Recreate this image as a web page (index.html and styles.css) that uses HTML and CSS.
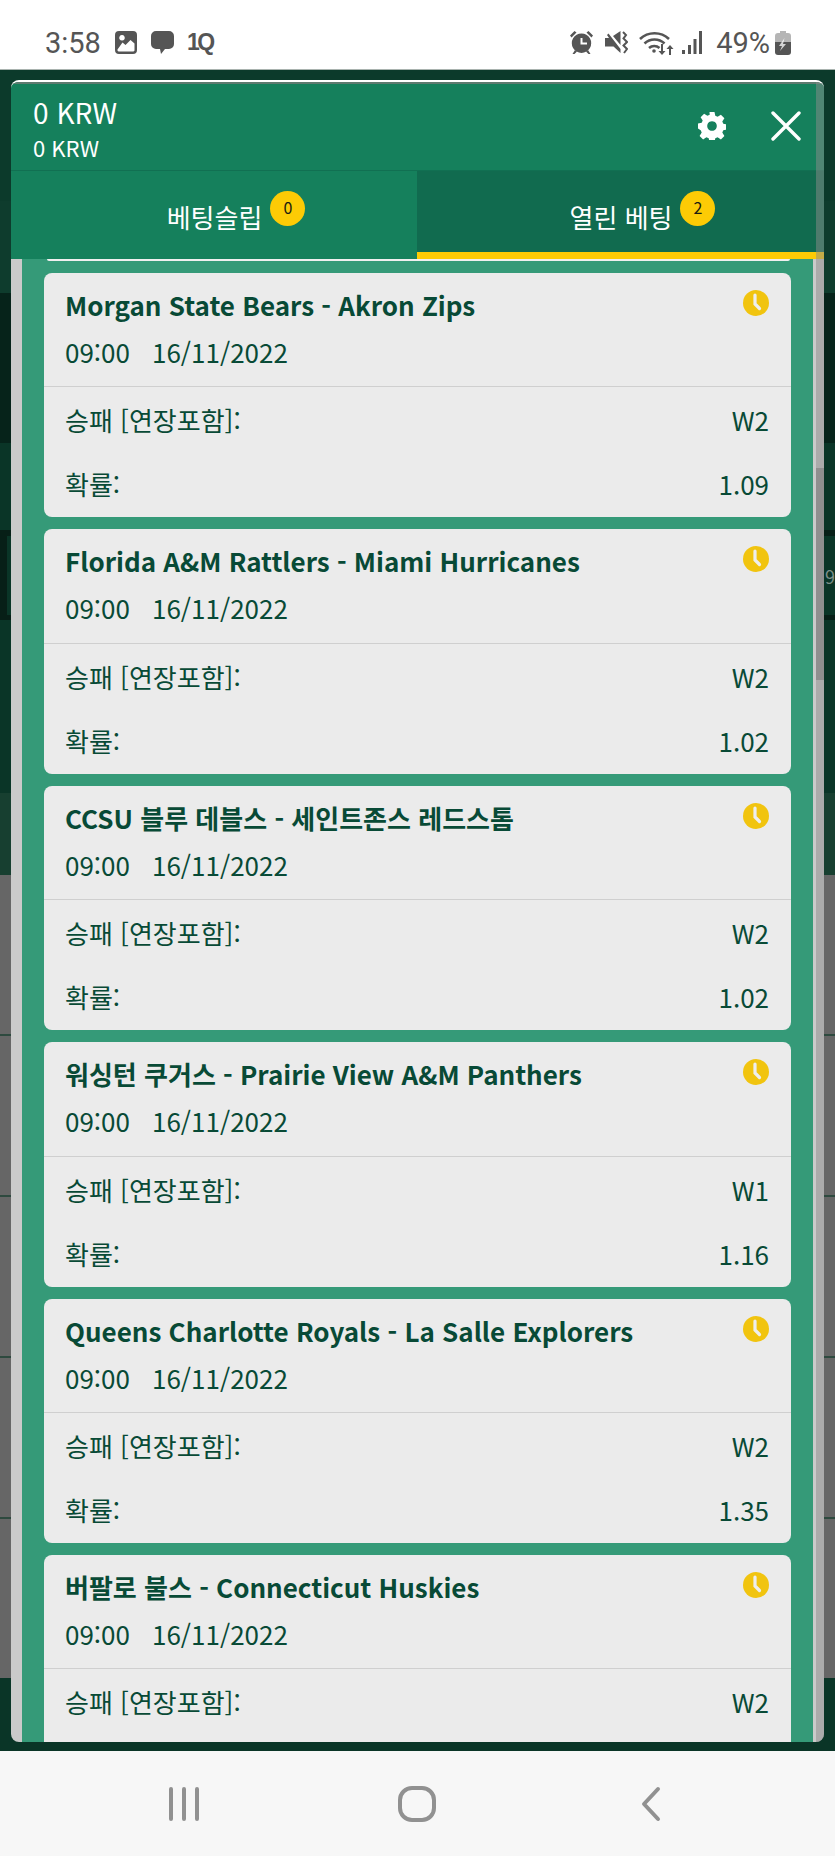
FILE: index.html
```html
<!DOCTYPE html>
<html lang="ko">
<head>
  <meta charset="UTF-8" />
  <meta name="viewport" content="width=device-width, initial-scale=1.0" />
  <title>열린 베팅</title>
  <link rel="stylesheet" href="styles.css">
</head>
<body>
  <!-- status bar -->
  <div class="status-bar">
    <div class="status-left">
      <span class="clock">3:58</span>
      <svg class="ic ic-pic" viewBox="0 0 22 23"><path fill-rule="evenodd" d="M4 0h14a4 4 0 0 1 4 4v15a4 4 0 0 1-4 4H4a4 4 0 0 1-4-4V4a4 4 0 0 1 4-4zM2.500 18.500v1a1.500 1.500 0 0 0 1.500 1h14a1.500 1.500 0 0 0 1.500-1v-7l-4-3.500-5 5-3-2.500zM7 4a2.800 2.800 0 1 0 .01 0z"/></svg>
      <svg class="ic ic-msg" viewBox="0 0 23 23"><path d="M5 0h13a5 5 0 0 1 5 5v8a5 5 0 0 1-5 5h-4l-4 5-1-5H5a5 5 0 0 1-5-5V5a5 5 0 0 1 5-5z"/></svg>
      <span class="one-q">1Q</span>
    </div>
    <div class="status-right">
      <svg class="ic ic-alarm" viewBox="0 0 23 23"><path fill-rule="evenodd" d="M11.500 2.500a9.700 9.700 0 1 1-.01 0zM10.500 7v6.500h6.500v-2h-4.500V7z"/><path d="M0 4.500 4.500 0l2 1.500L1.500 6.500zM23 4.500 18.500 0l-2 1.500 5 5zM2.500 23l2.500-4 2 1.500L4.500 23zM20.500 23 18 19l-2 1.500 2.500 2.500z"/></svg>
      <svg class="ic ic-mute" viewBox="0 0 23 23"><path d="M0 7h4L2 4l1.500-1.500 12 15.500v4L8.500 15.500H0zM8 5l7.500-5v14z"/><path d="M18 1l3 3-2.500 3.500 3.500 3.500-3.500 3.500 3.500 3.500-3 4" fill="none" stroke="#555" stroke-width="2"/></svg>
      <svg class="ic ic-wifi" viewBox="0 0 35 25"><g fill="none" stroke="#555" stroke-width="2.600"><path d="M1 9a21 21 0 0 1 29 0"/><path d="M5.500 13.500a14.500 14.500 0 0 1 20 0"/><path d="M10 18a8 8 0 0 1 10.500 0"/></g><circle cx="15" cy="21" r="1.800"/><path d="M22 14h2v7h2.500l-3.500 4-3.500-4H22zM30 25h2v-6h2.500L31 15l-3.500 4H30z"/></svg>
      <svg class="ic ic-signal" viewBox="0 0 20 23"><path d="M0 19h3v4H0zM6 14h3v9H6zM11.500 8h3v15h-3zM17 0h3v23h-3z"/></svg>
      <span class="battery-text">49%</span>
      <svg class="ic ic-battery" viewBox="0 0 16 24"><path fill="#b5b5b5" d="M5 0h6v2h2a3 3 0 0 1 3 3v6H0V5a3 3 0 0 1 3-3h2z"/><path d="M0 11h16v10a3 3 0 0 1-3 3H3a3 3 0 0 1-3-3z"/><path fill="#fff" d="M9.500 7 4 15h3l-2 5 6-7H8z" opacity=".75"/></svg>
    </div>
  </div>

  <!-- page behind the dialog -->
  <div class="page">
    <div class="band band-top"></div>
    <div class="band band-top2"></div>
    <div class="band band-dark"></div>
    <div class="band band-plain1"></div>
    <div class="band band-match"><span class="chip"></span><span class="peek">- 9</span></div>
    <div class="band band-plain2"></div>
    <div class="band band-light"></div>
    <div class="band grey-row grey-1"></div>
    <div class="band grey-row grey-2"></div>
    <div class="band grey-row grey-2"></div>
    <div class="band grey-row grey-3"></div>
    <div class="band grey-row grey-4"></div>
    <div class="band band-end"></div>

    <!-- dialog -->
    <div class="modal">
      <div class="modal-head">
        <div class="balance">
          <div class="balance-main">0 KRW</div>
          <div class="balance-sub">0 KRW</div>
        </div>
        <div class="head-btns">
          <svg class="gear" viewBox="0 0 28 28"><path fill="#fff" fill-rule="evenodd" d="M11.500 0h5l.8 3.800 2.300 1 3.300-2.100 3.500 3.500-2.100 3.300 1 2.300 3.700.7v5l-3.700.8-1 2.300 2.100 3.300-3.500 3.500-3.300-2.100-2.300 1-.8 3.700h-5l-.8-3.700-2.300-1-3.300 2.100-3.500-3.500 2.100-3.300-1-2.300L0 16.500v-5l3.700-.7 1-2.300-2.100-3.300 3.500-3.500 3.300 2.100 2.300-1zM14 9.200a4.800 4.800 0 1 0 .01 0z"/></svg>
          <svg class="close" viewBox="0 0 30 30"><path d="M2 2l26 26M28 2 2 28" stroke="#fff" stroke-width="3.400" stroke-linecap="round"/></svg>
        </div>
      </div>
      <div class="tabs">
        <div class="tab">베팅슬립<span class="badge">0</span></div>
        <div class="tab active">열린 베팅<span class="badge">2</span></div>
      </div>
      <div class="content">
        <div class="list">
          <div class="list-edge"></div>
          <div class="bet-card">
            <div class="bet-head">
              <div class="bet-title">Morgan State Bears - Akron Zips</div>
              <div class="bet-date"><span>09:00</span><span>16/11/2022</span></div>
              <svg class="bet-clock" viewBox="0 0 26 26"><circle cx="13" cy="13" r="13" fill="#f1c40f"/><path d="M12 5v9l4.500 4.500" fill="none" stroke="#eee" stroke-width="3.200" stroke-linecap="round"/></svg>
            </div>
            <div class="bet-body">
              <div class="bet-row"><span>승패 [연장포함]:</span><span>W2</span></div>
              <div class="bet-row"><span>확률:</span><span>1.09</span></div>
            </div>
          </div>
          <div class="bet-card">
            <div class="bet-head">
              <div class="bet-title">Florida A&amp;M Rattlers - Miami Hurricanes</div>
              <div class="bet-date"><span>09:00</span><span>16/11/2022</span></div>
              <svg class="bet-clock" viewBox="0 0 26 26"><circle cx="13" cy="13" r="13" fill="#f1c40f"/><path d="M12 5v9l4.500 4.500" fill="none" stroke="#eee" stroke-width="3.200" stroke-linecap="round"/></svg>
            </div>
            <div class="bet-body">
              <div class="bet-row"><span>승패 [연장포함]:</span><span>W2</span></div>
              <div class="bet-row"><span>확률:</span><span>1.02</span></div>
            </div>
          </div>
          <div class="bet-card">
            <div class="bet-head">
              <div class="bet-title">CCSU 블루 데블스 - 세인트존스 레드스톰</div>
              <div class="bet-date"><span>09:00</span><span>16/11/2022</span></div>
              <svg class="bet-clock" viewBox="0 0 26 26"><circle cx="13" cy="13" r="13" fill="#f1c40f"/><path d="M12 5v9l4.500 4.500" fill="none" stroke="#eee" stroke-width="3.200" stroke-linecap="round"/></svg>
            </div>
            <div class="bet-body">
              <div class="bet-row"><span>승패 [연장포함]:</span><span>W2</span></div>
              <div class="bet-row"><span>확률:</span><span>1.02</span></div>
            </div>
          </div>
          <div class="bet-card">
            <div class="bet-head">
              <div class="bet-title">워싱턴 쿠거스 - Prairie View A&amp;M Panthers</div>
              <div class="bet-date"><span>09:00</span><span>16/11/2022</span></div>
              <svg class="bet-clock" viewBox="0 0 26 26"><circle cx="13" cy="13" r="13" fill="#f1c40f"/><path d="M12 5v9l4.500 4.500" fill="none" stroke="#eee" stroke-width="3.200" stroke-linecap="round"/></svg>
            </div>
            <div class="bet-body">
              <div class="bet-row"><span>승패 [연장포함]:</span><span>W1</span></div>
              <div class="bet-row"><span>확률:</span><span>1.16</span></div>
            </div>
          </div>
          <div class="bet-card">
            <div class="bet-head">
              <div class="bet-title">Queens Charlotte Royals - La Salle Explorers</div>
              <div class="bet-date"><span>09:00</span><span>16/11/2022</span></div>
              <svg class="bet-clock" viewBox="0 0 26 26"><circle cx="13" cy="13" r="13" fill="#f1c40f"/><path d="M12 5v9l4.500 4.500" fill="none" stroke="#eee" stroke-width="3.200" stroke-linecap="round"/></svg>
            </div>
            <div class="bet-body">
              <div class="bet-row"><span>승패 [연장포함]:</span><span>W2</span></div>
              <div class="bet-row"><span>확률:</span><span>1.35</span></div>
            </div>
          </div>
          <div class="bet-card">
            <div class="bet-head">
              <div class="bet-title">버팔로 불스 - Connecticut Huskies</div>
              <div class="bet-date"><span>09:00</span><span>16/11/2022</span></div>
              <svg class="bet-clock" viewBox="0 0 26 26"><circle cx="13" cy="13" r="13" fill="#f1c40f"/><path d="M12 5v9l4.500 4.500" fill="none" stroke="#eee" stroke-width="3.200" stroke-linecap="round"/></svg>
            </div>
            <div class="bet-body">
              <div class="bet-row"><span>승패 [연장포함]:</span><span>W2</span></div>
            </div>
          </div>
        </div>
      </div>
      <!-- scrollbar lies over the header too -->
      <div class="scroll-track"><div class="scroll-thumb"></div></div>
    </div>
  </div>

  <!-- android nav -->
  <div class="nav-bar">
    <svg class="nav-ic" width="32" height="36" viewBox="0 0 32 36"><path d="M3 3v30M16 3v30M29 3v30" fill="none" stroke="#919191" stroke-width="4" stroke-linecap="round"/></svg>
    <svg class="nav-ic" width="38" height="36" viewBox="0 0 38 36"><rect x="2" y="2" width="34" height="32" rx="12" fill="none" stroke="#919191" stroke-width="4"/></svg>
    <svg class="nav-ic" width="20" height="36" viewBox="0 0 20 36"><path d="M17 3 3 18l14 15" fill="none" stroke="#919191" stroke-width="4" stroke-linecap="round" stroke-linejoin="round"/></svg>
  </div>
</body>
</html>
```

FILE: styles.css
```css
html, body {
  margin: 0;
  padding: 0;
  width: 835px;
  height: 1856px;
  overflow: hidden;
  background: #0a3527;
  font-family: "Noto Sans CJK KR", "Noto Sans", sans-serif;
}

.ic {
  display: block;
  fill: #555;
}

/* status bar */
.status-bar {
  height: 69px;
  padding: 0 44px 0 45px;
  background: #fff;
  border-bottom: 1px solid #a9b3af;
  display: flex;
  justify-content: space-between;
  align-items: center;
  color: #555;
  font-family: Roboto, sans-serif;
  font-size: 29px;
}
.status-bar > div {
  display: flex;
  align-items: center;
  height: 46px;
  margin-top: 19px;
  margin-bottom: 3px;
}
.clock { margin-right: 14px; }
.ic-pic { width: 22px; height: 23px; margin-right: 14px; }
.ic-msg { width: 23px; height: 23px; margin-right: 13px; }
.one-q {
  font-family: "Liberation Sans", sans-serif;
  font-weight: 700;
  font-size: 23px;
  letter-spacing: -2.500px;
}
.ic-alarm { width: 23px; height: 23px; margin-right: 12px; }
.ic-mute { width: 23px; height: 23px; margin-right: 11px; }
.ic-wifi { width: 35px; height: 25px; margin-right: 8px; }
.ic-signal { width: 20px; height: 23px; margin-right: 14px; }
.ic-battery { width: 16px; height: 24px; margin-left: 5px; }

/* backdrop */
.page {
  position: relative;
  height: 1681px;
  overflow: hidden;
}
.band { box-sizing: border-box; }
.band-top { height: 131px; background: #0c3a2b; }
.band-top2 { height: 92px; background: #0e3c2d; }
.band-dark { height: 150px; background: #06231a; }
.band-plain1 { height: 87px; background: #0a3527; }
.band-match {
  height: 90px;
  background: #0a3527;
  border-top: 6px solid #071f17;
  border-bottom: 5px solid #071f17;
  display: flex;
  justify-content: space-between;
  align-items: center;
}
.chip {
  width: 7px;
  height: 79px;
  background: #071f17;
}
.peek {
  color: #7c8f88;
  font-size: 18px;
  white-space: nowrap;
}
.band-plain2 { height: 173px; background: #0a3527; }
.band-light { height: 82px; background: #173f30; }
.grey-row {
  background: #666;
  border-bottom: 2px solid #2e4a3f;
}
.grey-1 { height: 161px; }
.grey-2 { height: 161px; }
.grey-3 { height: 161px; }
.grey-4 { height: 159px; border-bottom: 0; }
.band-end { height: 73px; background: #0a3527; }

/* dialog */
.modal {
  position: absolute;
  top: 10px;
  left: 11px;
  width: 813px;
  height: 1662px;
  background: #cacaca;
  border-radius: 8px;
  border-top: 2px solid #fff;
  box-sizing: border-box;
  overflow: hidden;
  display: flex;
  flex-direction: column;
}
.modal-head {
  height: 89px;
  flex: none;
  padding: 0 23px 0 22px;
  background: #15805c;
  color: #fff;
  display: flex;
  justify-content: space-between;
  align-items: center;
  box-sizing: border-box;
  border-top: 2px solid #5d7a6f;
  border-bottom: 1px solid #117052;
}
.balance { padding-top: 4px; }
.balance-main {
  font-size: 28px;
  line-height: 36px;
}
.balance-sub {
  font-size: 22px;
  line-height: 34px;
}
.head-btns {
  display: flex;
  align-items: center;
  gap: 45px;
  margin-top: -3px;
}
.gear { width: 28px; height: 28px; display: block; }
.close { width: 30px; height: 30px; display: block; }

.tabs {
  display: flex;
  height: 88px;
  flex: none;
}
.tab {
  flex: 1;
  background: #15805c;
  color: #fff;
  font-size: 26px;
  display: flex;
  justify-content: center;
  padding: 28px 0 0 44px;
  box-sizing: border-box;
  line-height: 36px;
  gap: 8px;
}
.tab:first-child { flex: 0 0 406px; }
.tab.active {
  background: #116b4f;
  border-bottom: 7px solid #fdcb05;
}
.badge {
  width: 35px;
  height: 35px;
  margin-top: -8px;
  border-radius: 50%;
  background: #fdcb05;
  color: #1c1c10;
  font-size: 16px;
  line-height: 33px;
  text-align: center;
}

.content {
  flex: 1;
  min-height: 0;
  padding: 0 11px;
  overflow: hidden;
}
.list {
  height: 100%;
  box-sizing: border-box;
  padding: 0 22px;
  background: #359a78;
  display: flex;
  flex-direction: column;
  gap: 12px;
  overflow: hidden;
}
.list-edge {
  flex: none;
  height: 2px;
  margin: 0 1px 0 3px;
  background: #f0f0f0;
  border-radius: 0 0 4px 4px;
}
.bet-card {
  flex: none;
  background: #ebebeb;
  border-radius: 8px;
  color: #084a36;
}
.bet-head {
  position: relative;
  height: 114.400px;
  box-sizing: border-box;
  padding: 9px 21px 0;
  border-bottom: 1px solid #cfcfcf;
}
.bet-title {
  font-size: 26px;
  font-weight: 700;
  line-height: 46px;
}
.bet-date {
  font-size: 26px;
  line-height: 48px;
  display: flex;
  gap: 22px;
}
.bet-clock {
  position: absolute;
  top: 17px;
  right: 22px;
  width: 26px;
  height: 26px;
}
.bet-body {
  height: 130px;
  padding: 1px 22px 0 21px;
  box-sizing: border-box;
}
.bet-row {
  display: flex;
  justify-content: space-between;
  font-size: 26px;
  line-height: 64px;
}

.scroll-track {
  position: absolute;
  top: 0;
  right: 0;
  bottom: 0;
  width: 8px;
  background: rgba(140, 140, 140, 0.5);
}
.scroll-thumb {
  position: absolute;
  top: 386px;
  left: 0;
  width: 100%;
  height: 212px;
  background: #8f8f8f;
}

/* nav */
.nav-bar {
  height: 105px;
  padding-left: 168px;
  background: #f7f7f7;
  display: flex;
  align-items: center;
  gap: 198px;
}
.nav-ic:last-child { margin-left: 7px; }
```
